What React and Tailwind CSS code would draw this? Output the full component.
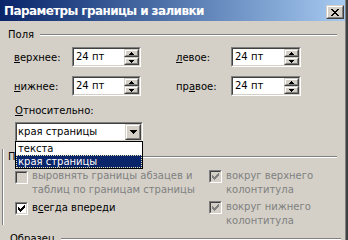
import React from "react";

function Pixels({ rows, color, w, h }) {
  const rects = [];
  rows.forEach((r, y) => {
    for (let x = 0; x < r.length; x++) {
      if (r[x] === "X") rects.push(<rect key={x + "-" + y} x={x} y={y} width="1" height="1" />);
    }
  });
  return (
    <svg width={w} height={h} viewBox={`0 0 ${w} ${h}`} fill={color} shapeRendering="crispEdges" className="block">
      {rects}
    </svg>
  );
}

const CLOSE = ["XX....XX", ".XX..XX.", "..XXXX..", "...XX...", "..XXXX..", ".XX..XX.", "XX....XX"];
const CHECK = ["......X", ".....XX", "X...XXX", "XX.XXX.", "XXXXX..", ".XXX...", "..X...."];
const UP = ["..X..", ".XXX.", "XXXXX"];
const DOWN = ["XXXXX", ".XXX.", "..X.."];
const DROP = ["XXXXXXX", ".XXXXX.", "..XXX..", "...X..."];

function Raised({ className = "", children }) {
  return (
    <div className={"border border-t-[#d4d0c8] border-l-[#d4d0c8] border-b-[#404040] border-r-[#404040] bg-[#d4d0c8] " + className}>
      <div className="w-full h-full border border-t-white border-l-white border-b-[#808080] border-r-[#808080] flex items-center justify-center">
        {children}
      </div>
    </div>
  );
}

function Sunken({ className = "", inner = "bg-white", children }) {
  return (
    <div className={"border border-t-[#808080] border-l-[#808080] border-b-white border-r-white " + className}>
      <div className={"w-full h-full border border-t-[#404040] border-l-[#404040] border-b-[#d4d0c8] border-r-[#d4d0c8] flex " + inner}>
        {children}
      </div>
    </div>
  );
}

function Spin({ className }) {
  return (
    <Sunken className={"h-[20px] " + className}>
      <div className="flex-1 pl-[2px] leading-[16px]">24 пт</div>
      <div className="w-[15px] flex flex-col">
        <Raised className="h-[8px] w-[15px]">
          <Pixels rows={UP} color="#000" w={5} h={3} />
        </Raised>
        <Raised className="h-[8px] w-[15px]">
          <Pixels rows={DOWN} color="#000" w={5} h={3} />
        </Raised>
      </div>
    </Sunken>
  );
}

function Check({ checked, disabled }) {
  return (
    <Sunken className="w-[13px] h-[13px] shrink-0" inner={disabled ? "bg-[#d4d0c8]" : "bg-white"}>
      <div className="pl-px pt-px">
        {checked && <Pixels rows={CHECK} color={disabled ? "#808080" : "#000"} w={7} h={7} />}
      </div>
    </Sunken>
  );
}

function Etched({ className = "" }) {
  return <div className={"h-[2px] border-t border-b border-t-[#808080] border-b-white " + className} />;
}

export default function App() {
  return (
    <div className="w-[348px] h-[240px] overflow-hidden bg-[#d4d0c8] flex font-['DejaVu_Sans',sans-serif] text-[10px] leading-[13px] text-black">
      <div className="w-[345px] flex flex-col">
        <div className="h-[21px] shrink-0 flex items-start justify-between bg-linear-to-r from-[#0a246a] to-[#a6caf0] pl-[4px] pr-[1px]">
          <span className="self-center text-white font-bold text-[12px] tracking-[-0.6px] leading-[14px]">
            Параметры границы и заливки
          </span>
          <Raised className="w-[18px] h-[14px] mt-[5px]">
            <Pixels rows={CLOSE} color="#000" w={8} h={7} />
          </Raised>
        </div>

        <div className="relative flex flex-col flex-1">
          <div className="flex items-center h-[13px] mt-[7px] px-[8px]">
            <span>Поля</span>
            <Etched className="flex-1 ml-[6px]" />
          </div>

          <div className="flex items-center h-[20px] mt-[6px]">
            <span className="pl-[14px] w-[72px]"><u>в</u>ерхнее:</span>
            <Spin className="w-[69px]" />
            <span className="ml-[35px] w-[55px]"><u>л</u>евое:</span>
            <Spin className="w-[70px]" />
          </div>

          <div className="flex items-center h-[20px] mt-[9px]">
            <span className="pl-[14px] w-[72px]"><u>н</u>ижнее:</span>
            <Spin className="w-[69px]" />
            <span className="ml-[35px] w-[55px]">пр<u>а</u>вое:</span>
            <Spin className="w-[70px]" />
          </div>

          <div className="mt-[8px] h-[13px] pl-[15px]">
            <u>О</u>тносительно:
          </div>

          <Sunken className="mt-[5px] ml-[15px] w-[128px] h-[20px]">
            <div className="flex-1 pl-[1px] leading-[16px]">края страницы</div>
            <Raised className="w-[16px] h-[16px]">
              <Pixels rows={DROP} color="#000" w={7} h={4} />
            </Raised>
          </Sunken>

          <div className="relative">
            <div className="absolute left-[2px] top-[7px] h-[76px] w-[2px] border-l border-r border-l-[#808080] border-r-white" />
            <div className="flex items-center h-[13px] mt-[8px] px-[8px]">
              <span>Параметры</span>
              <Etched className="flex-1 ml-[6px]" />
            </div>

            <div className="flex mt-[6px] leading-[14px]">
              <div className="w-[209px] pl-[15px] flex flex-col">
                <div className="flex items-start gap-[4px]">
                  <div className="mt-[2px]"><Check disabled /></div>
                  <div className="text-[#808080]">
                    выровнять границы абзацев и<br />таблиц по границам страницы
                  </div>
                </div>
                <div className="flex items-start gap-[4px] mt-[4px]">
                  <div className="mt-[1px]"><Check checked /></div>
                  <div>в<u>с</u>егда впереди</div>
                </div>
              </div>
              <div className="flex flex-col">
                <div className="flex items-start gap-[4px]">
                  <div className="mt-[1px]"><Check checked disabled /></div>
                  <div className="text-[#808080]">
                    вокруг верхнего<br />колонтитула
                  </div>
                </div>
                <div className="flex items-start gap-[4px] mt-[3px]">
                  <div className="mt-[1px]"><Check checked disabled /></div>
                  <div className="text-[#808080]">
                    вокруг нижнего<br />колонтитула
                  </div>
                </div>
              </div>
            </div>
          </div>

          <div className="flex items-center h-[13px] mt-[4px] pl-[10px] pr-[4px]">
            <span>Образец</span>
            <Etched className="flex-1 ml-[6px]" />
          </div>

          <div className="absolute left-[15px] top-[120px] w-[128px] border border-black bg-white">
            <div className="h-[13px] pl-[2px] leading-[13px]">текста</div>
            <div className="h-[13px] bg-[#0a246a] text-white border border-dotted border-[#e8e8b0] pl-[1px] leading-[11px]">
              края страницы
            </div>
          </div>
        </div>
      </div>
      <div className="w-px bg-[#808080]" />
      <div className="w-[2px] bg-[#404040]" />
    </div>
  );
}
